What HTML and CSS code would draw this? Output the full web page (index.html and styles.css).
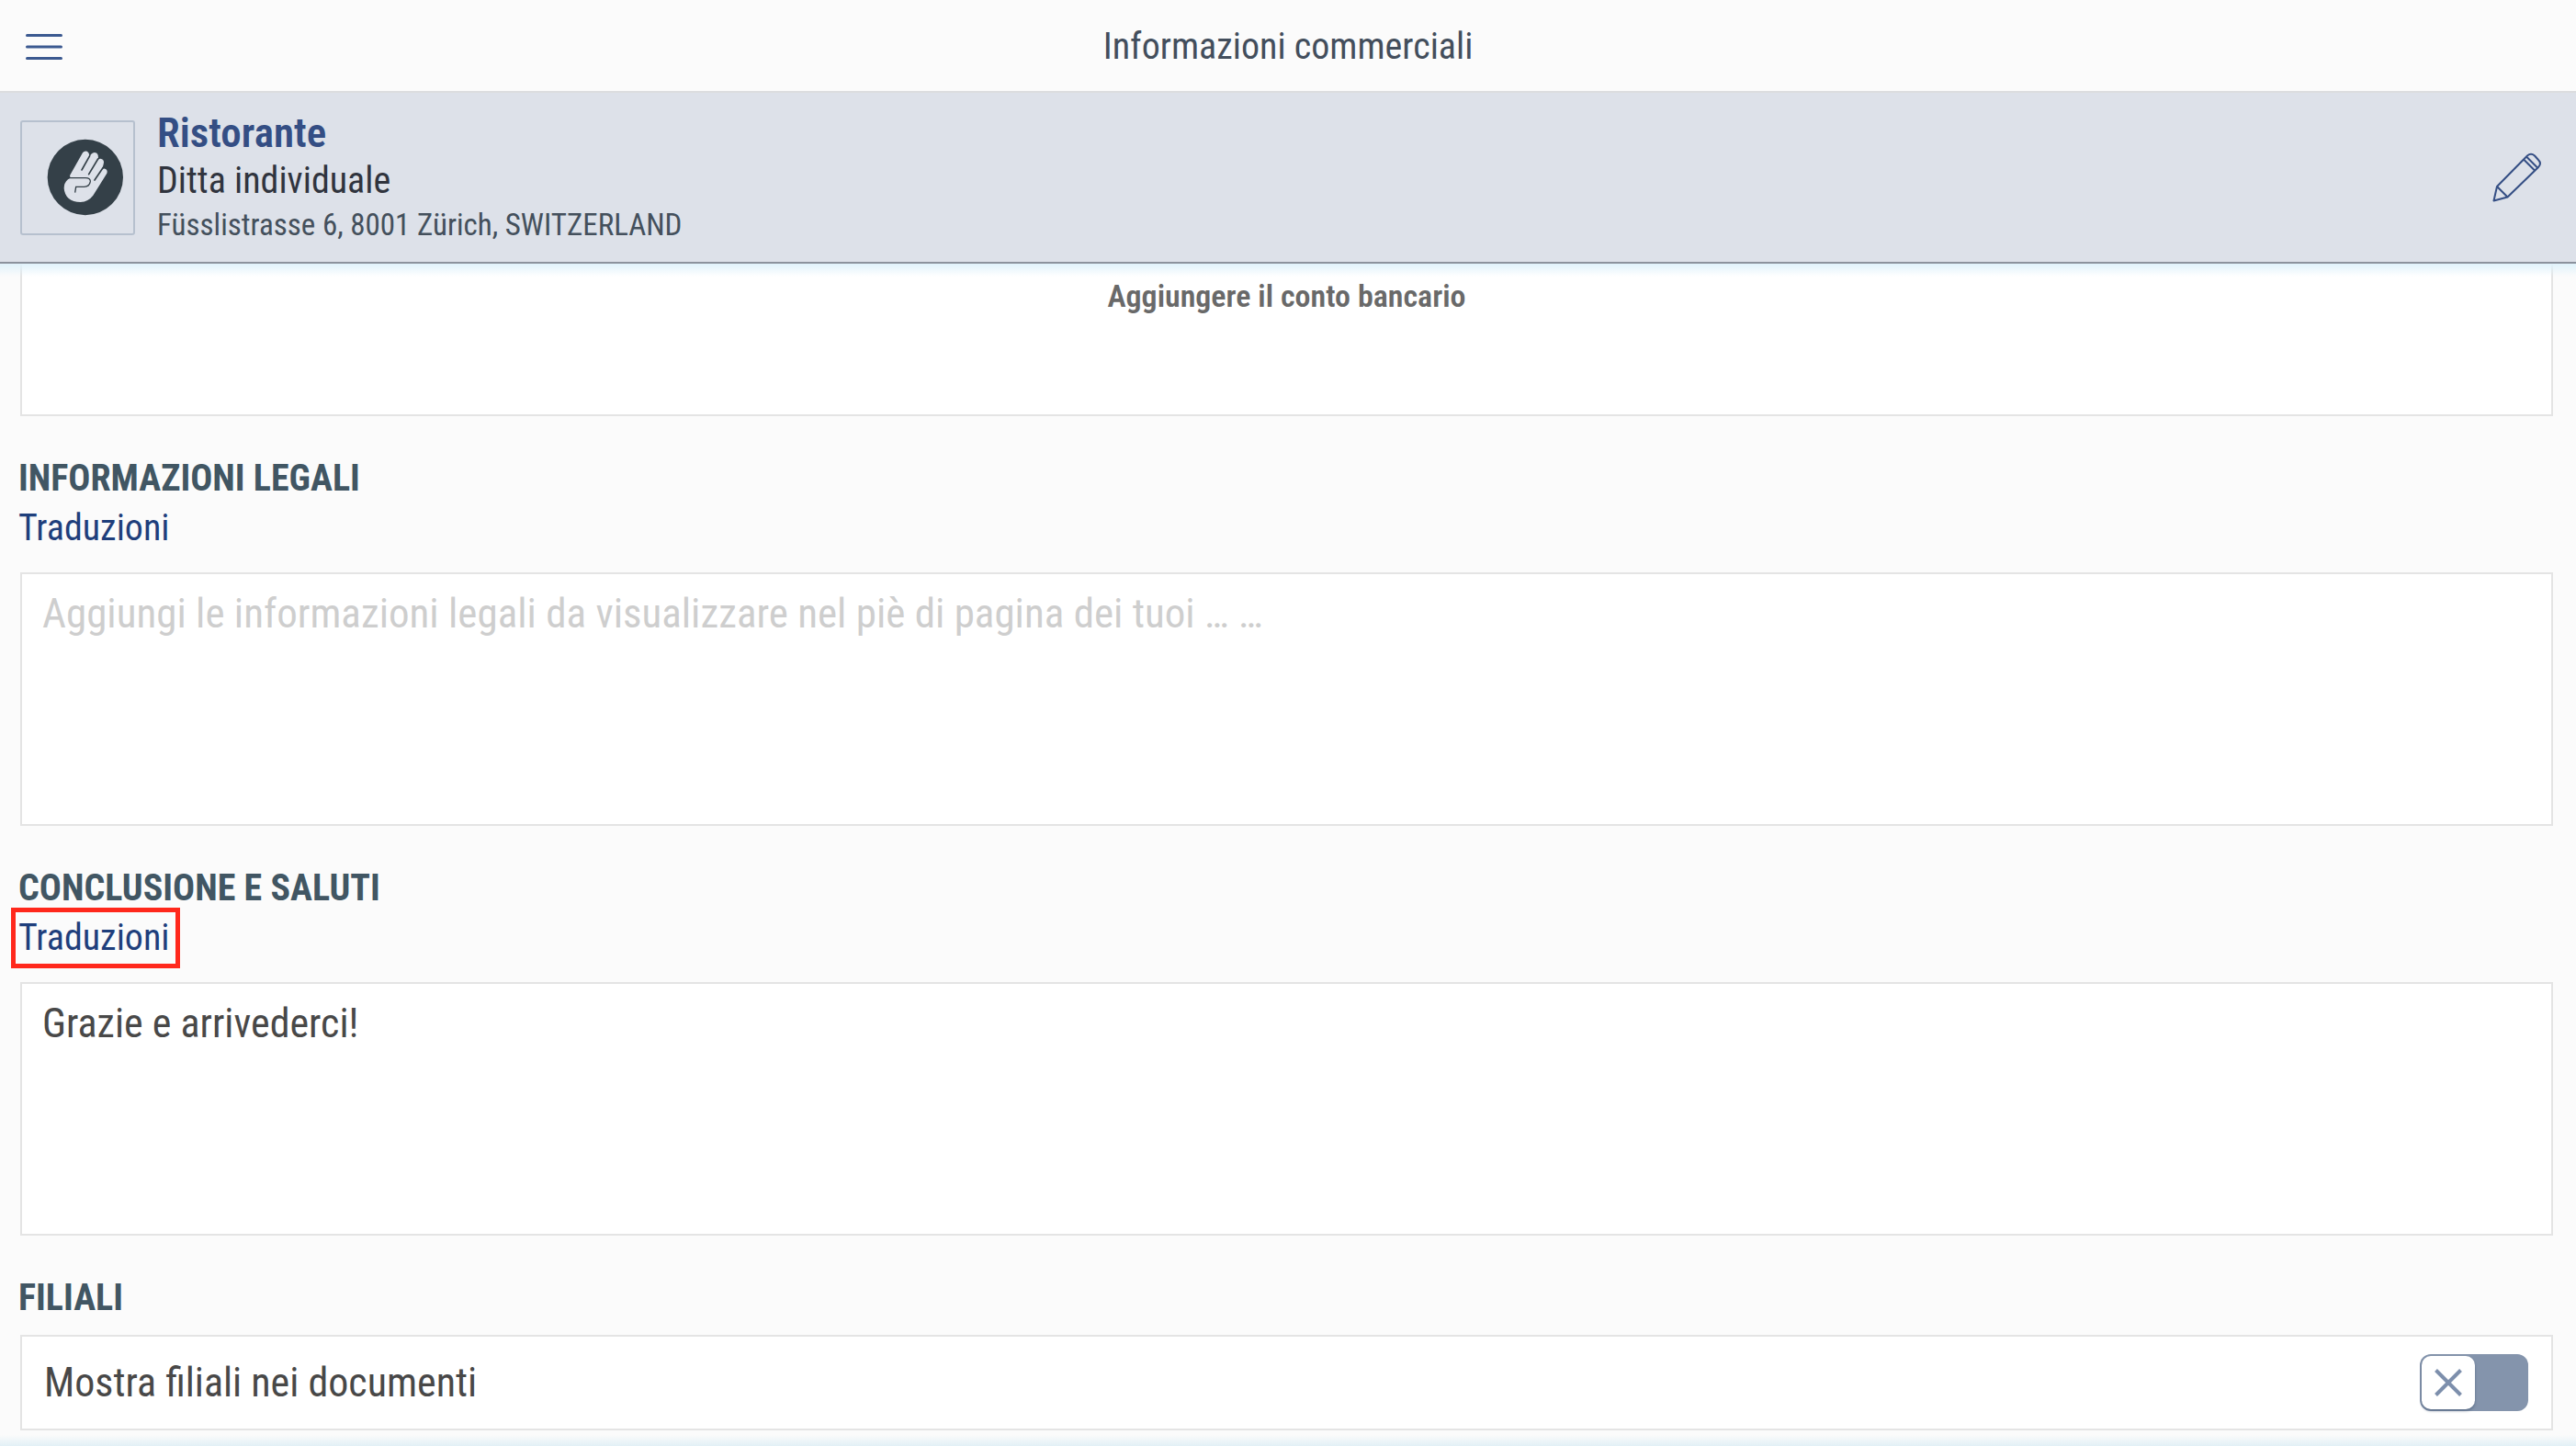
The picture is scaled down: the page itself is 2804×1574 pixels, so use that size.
FILE: index.html
```html
<!DOCTYPE html>
<html lang="it">
<head>
<meta charset="utf-8">
<meta name="viewport" content="width=device-width, initial-scale=1">
<title>Informazioni commerciali</title>
<link rel="stylesheet" href="styles.css">
</head>
<body>
<div class="app">
  <header class="topbar">
    <button class="icon-button menu" type="button" aria-label="Menu">
      <svg width="40" height="28" viewBox="0 0 40 28" fill="none" stroke="currentColor" stroke-width="3" stroke-linecap="round"><path d="M1.5 1.5h37M1.5 14h37M1.5 26.500h37"/></svg>
    </button>
    <h1 class="topbar-title">Informazioni commerciali</h1>
  </header>

  <section class="company">
    <div class="company-logo">
      <svg width="84" height="84" viewBox="153 450 252 252" aria-hidden="true">
        <circle cx="278.500" cy="576" r="123.500" fill="#344048"/>
        <path fill="#dde1e9" d="M270 496 L228 570 Q232 579 222 583 Q209 594 209 612 Q213 656 263 657 Q289 655 304 635 L349 563 Q353 552 343 548 Q337 546 333 551 L338 533 Q342 519 331 516 Q325 514 320 519 Q323 503 316 497 Q306 492 298 500 L291 509 Q293 495 284 491 Q275 489 270 496 Z"/>
        <path fill="none" stroke="#344048" stroke-width="5" stroke-linecap="round" d="M293 506L267 552M320 516L290 566M337 544L309 585"/>
        <path fill="none" stroke="#344048" stroke-width="4" d="M224 578H279Q296 578 295 590Q292 607 275 607H248L245 626"/>
      </svg>
    </div>
    <div class="company-text">
      <h2 class="company-name">Ristorante</h2>
      <p class="company-type">Ditta individuale</p>
      <p class="company-address">Füsslistrasse 6, 8001 Zürich, SWITZERLAND</p>
    </div>
    <button class="icon-button edit" type="button" aria-label="Modifica">
      <svg width="54" height="54" viewBox="0 0 54 54" fill="none" stroke="currentColor" stroke-width="2" stroke-linejoin="round"><path d="M1.500 52.500L5 37L38 3.500Q42 0 46 3.500L50 8Q54 12 50 16L16.500 48.500ZM5 37L16.500 48.500M34.500 8L45.500 19M37.500 5L48.500 16"/></svg>
    </button>
  </section>

  <main class="content">
    <div class="card bank">
      <button class="bank-add" type="button">Aggiungere il conto bancario</button>
    </div>

    <section class="group">
      <h3 class="group-title"><label for="legal">INFORMAZIONI LEGALI</label></h3>
      <a class="translations" href="#legal">Traduzioni</a>
      <textarea class="card note" id="legal" placeholder="Aggiungi le informazioni legali da visualizzare nel piè di pagina dei tuoi … …"></textarea>
    </section>

    <section class="group">
      <h3 class="group-title"><label for="closing">CONCLUSIONE E SALUTI</label></h3>
      <a class="translations highlighted" href="#closing">Traduzioni</a>
      <textarea class="card note" id="closing">Grazie e arrivederci!</textarea>
    </section>

    <section class="group">
      <h3 class="group-title">FILIALI</h3>
      <label class="card switch-row">
        <span>Mostra filiali nei documenti</span>
        <span class="switch">
          <input class="switch-input" type="checkbox">
          <span class="switch-thumb">
            <svg width="30" height="30" viewBox="0 0 30 30" fill="none" stroke="currentColor" stroke-width="4" aria-hidden="true"><path d="M1.500 1.500L28.500 28.500M28.500 1.500L1.500 28.500"/></svg>
          </span>
        </span>
      </label>
    </section>
  </main>
</div>
</body>
</html>
```

FILE: styles.css
```css
* {
  box-sizing: border-box;
}

html {
  background: #fbfbfb;
}

body,
h1,
h2,
h3,
p {
  margin: 0;
  font-weight: 400;
}

body {
  font-family: "Roboto Condensed", Roboto, sans-serif;
  color: #484848;
}

button,
textarea {
  font: inherit;
  color: inherit;
}

svg {
  display: block;
}

.app {
  position: relative;
  display: flex;
  flex-direction: column;
  min-height: 100vh;
  background: #fbfbfb;
}

/* soft blue edge along the bottom of the window */
.app::after {
  content: "";
  position: absolute;
  inset: auto 0 0;
  height: 12px;
  background: linear-gradient(to top, #e2f0f6, rgba(226, 240, 246, 0));
}

.icon-button {
  padding: 0;
  border: 0;
  background: none;
  color: #344e84;
  cursor: pointer;
}

/* Top bar */
.topbar {
  display: grid;
  grid-template-columns: 1fr auto 1fr;
  align-items: center;
  height: 101px;
  padding: 2px 28px 0;
  border-bottom: 2px solid #dcdddf;
}

.menu {
  justify-self: start;
  color: #3b5990;
}

.topbar-title {
  font-size: 40px;
  line-height: 54px;
  color: #434e5c;
}

/* Company header */
.company {
  display: flex;
  align-items: center;
  gap: 24px;
  padding: 17px 37px 17px 22px;
  border-bottom: 2px solid #8c929d;
  background: #dde1e9;
}

.company-logo {
  display: flex;
  align-items: center;
  justify-content: flex-end;
  width: 125px;
  height: 125px;
  padding-right: 10px;
  border: 2px solid #b6c0ce;
  border-radius: 3px;
}

.company-text {
  flex: 1;
}

.company-name {
  font-size: 45px;
  font-weight: 600;
  line-height: 54px;
  color: #344e84;
}

.company-type {
  font-size: 40px;
  line-height: 50px;
  color: #30343e;
}

.company-address {
  font-size: 33px;
  line-height: 46px;
  color: #44505c;
}

/* Content */
.content {
  position: relative;
  display: flex;
  flex-direction: column;
  gap: 41px;
  padding: 0 25px 17px 20px;
}

.content::before {
  content: "";
  position: absolute;
  inset: 0 0 auto;
  height: 14px;
  background: linear-gradient(#e0f2fb, rgba(224, 242, 251, 0));
}

.card {
  margin: 0 0 0 2px;
  border: 2px solid #e4e4e4;
  background: #fff;
}

.bank {
  height: 166px;
  padding-top: 12px;
  border-top: 0;
  text-align: center;
}

.bank-add {
  padding: 0;
  border: 0;
  background: none;
  font-size: 34px;
  font-weight: 600;
  line-height: 46px;
  color: #696969;
}

.group {
  display: flex;
  flex-direction: column;
}

.group-title {
  font-size: 40px;
  font-weight: 700;
  line-height: 54px;
  color: #415663;
}

.translations {
  position: relative;
  align-self: flex-start;
  margin-bottom: 21px;
  font-size: 40px;
  line-height: 54px;
  color: #1f3f7c;
  text-decoration: none;
}

.highlighted::after {
  content: "";
  position: absolute;
  inset: -6px -12px -6px -8px;
  border: 5px solid #ff281c;
}

.note {
  display: block;
  height: 276px;
  padding: 16px 22px;
  border-radius: 0;
  outline: 0;
  resize: none;
  font-size: 44px;
  line-height: 54px;
}

.note::placeholder {
  font-size: 45px;
  color: #cecece;
  opacity: 1;
}

/* Switch row */
.switch-row {
  display: flex;
  align-items: center;
  justify-content: space-between;
  height: 104px;
  margin-top: 13px;
  padding: 0 25px 0 24px;
  font-size: 44px;
  line-height: 54px;
}

.switch {
  position: relative;
  display: flex;
  width: 118px;
  height: 62px;
  padding: 2px;
  border-radius: 12px;
  background: #8494ac;
}

.switch-input {
  position: absolute;
  inset: 0;
  width: 100%;
  height: 100%;
  margin: 0;
  opacity: 0;
}

.switch-thumb {
  display: flex;
  align-items: center;
  justify-content: center;
  width: 58px;
  height: 58px;
  border-radius: 10px;
  background: #fff;
  box-shadow: 0 2px 3px rgba(40, 60, 90, 0.4);
  color: #7d8fac;
}

.switch-input:checked + .switch-thumb {
  margin-left: auto;
}
```
